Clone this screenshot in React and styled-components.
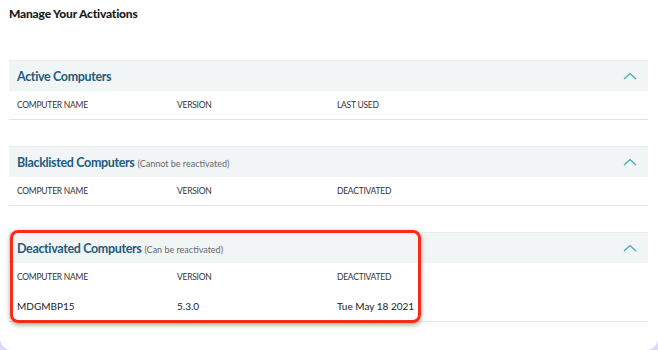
import React from 'react'
import styled, { createGlobalStyle } from 'styled-components'

const Global = createGlobalStyle`
  html, body {
    margin: 0;
    padding: 0;
    background: #dcd9f6;
  }
  body {
    font-family: Lato, "Open Sans", sans-serif;
    color: #222;
  }
`

const Window = styled.div`
  width: 658px;
  height: 350px;
  box-sizing: border-box;
  background: #fff;
  border-radius: 0 0 12px 12px;
  padding: 0 10px 0 9px;
  overflow: hidden;
`

const Title = styled.h1`
  margin: 0;
  padding-top: 6px;
  height: 60px;
  box-sizing: border-box;
  font-size: 12px;
  font-weight: 900;
  color: #1b1b1b;
  letter-spacing: -0.2px;
`

const Section = styled.section`
  position: relative;
  margin-bottom: 26px;
`

const Band = styled.div`
  height: 31px;
  display: flex;
  align-items: center;
  justify-content: space-between;
  padding: 0 8px;
  background: #f2f5f6;
  border-top: 1px solid #e8edf0;
  box-sizing: border-box;
`

const SectionTitle = styled.h2`
  margin: 0;
  font-size: 12.5px;
  font-weight: 700;
  color: #1d5c7f;
  letter-spacing: -0.35px;
`

const Note = styled.span`
  font-size: 9px;
  font-weight: 400;
  color: #666;
  margin-left: 3px;
  letter-spacing: 0;
`

const Table = styled.div`
  border-bottom: 1px solid #dfe6ea;
`

const Row = styled.div`
  display: grid;
  grid-template-columns: 160px 160px 1fr;
  align-items: center;
  height: ${p => (p.$head ? 28 : 30)}px;
  padding: 0 8px;
  font-size: ${p => (p.$head ? 8.5 : 10)}px;
  letter-spacing: ${p => (p.$head ? -0.25 : 0)}px;
  color: ${p => (p.$head ? '#333' : '#222')};
  text-transform: ${p => (p.$head ? 'uppercase' : 'none')};
`

const Highlight = styled.div`
  position: absolute;
  left: 1px;
  top: -2px;
  width: 411px;
  height: 93px;
  box-sizing: border-box;
  border: 3px solid #fb2a16;
  border-radius: 8px;
  box-shadow: 0 2px 5px rgba(0, 0, 0, 0.35);
  pointer-events: none;
`

const Chevron = () => (
  <svg width="14" height="8" viewBox="0 0 14 8" style={{ marginRight: 3 }}>
    <polyline points="1,7 7,1.5 13,7" fill="none" stroke="#3aa7b5" strokeWidth="1.2" />
  </svg>
)

const sections = [
  { title: 'Active Computers', cols: ['Computer Name', 'Version', 'Last Used'], rows: [] },
  {
    title: 'Blacklisted Computers',
    note: '(Cannot be reactivated)',
    cols: ['Computer Name', 'Version', 'Deactivated'],
    rows: []
  },
  {
    title: 'Deactivated Computers',
    note: '(Can be reactivated)',
    cols: ['Computer Name', 'Version', 'Deactivated'],
    rows: [['MDGMBP15', '5.3.0', 'Tue May 18 2021']],
    marked: true
  }
]

export default function App() {
  return (
    <Window>
      <Global />
      <Title>Manage Your Activations</Title>
      {sections.map(s => (
        <Section key={s.title}>
          <Band>
            <SectionTitle>
              {s.title}
              {s.note && <Note>{s.note}</Note>}
            </SectionTitle>
            <Chevron />
          </Band>
          <Table>
            <Row $head>
              {s.cols.map(c => <span key={c}>{c}</span>)}
            </Row>
            {s.rows.map(r => (
              <Row key={r[0]}>
                {r.map(c => <span key={c}>{c}</span>)}
              </Row>
            ))}
          </Table>
          {s.marked && <Highlight />}
        </Section>
      ))}
    </Window>
  )
}
